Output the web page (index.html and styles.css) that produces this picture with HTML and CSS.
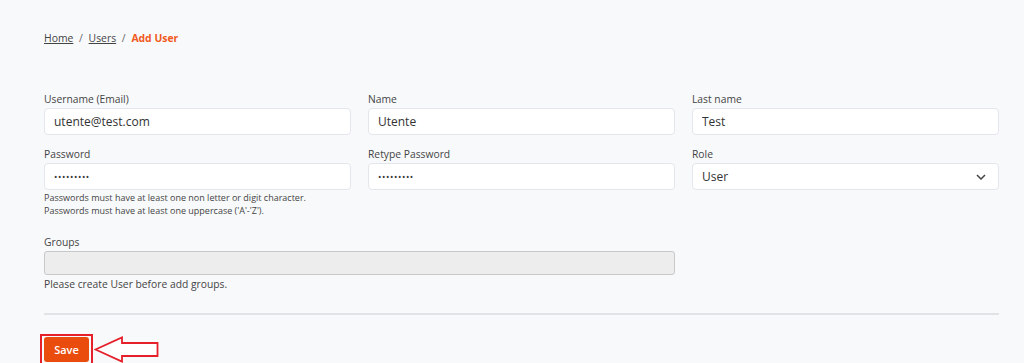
FILE: index.html
```html
<!DOCTYPE html>
<html lang="en">
<head>
  <meta charset="UTF-8">
  <title>Add User</title>
  <link rel="stylesheet" href="styles.css">
</head>
<body>
  <div class="page">
    <nav class="breadcrumb">
      <a href="#">Home</a>
      <span class="sep">/</span>
      <a href="#">Users</a>
      <span class="sep">/</span>
      <span class="current">Add User</span>
    </nav>

    <form class="user-form">
      <div class="form-grid">
        <div class="form-group">
          <label for="username">Username (Email)</label>
          <input type="text" id="username" value="utente@test.com">
        </div>
        <div class="form-group">
          <label for="name">Name</label>
          <input type="text" id="name" value="Utente">
        </div>
        <div class="form-group">
          <label for="lastname">Last name</label>
          <input type="text" id="lastname" value="Test">
        </div>

        <div class="form-group">
          <label for="password">Password</label>
          <input type="password" id="password" value="123456789">
          <p class="hint">Passwords must have at least one non letter or digit character.</p>
          <p class="hint">Passwords must have at least one uppercase ('A'-'Z').</p>
        </div>
        <div class="form-group">
          <label for="retype">Retype Password</label>
          <input type="password" id="retype" value="123456789">
        </div>
        <div class="form-group">
          <label for="role">Role</label>
          <div class="select-wrap">
            <select id="role">
              <option>User</option>
            </select>
            <svg class="chevron" width="10" height="6" viewBox="0 0 10 6"><path d="M1 1l4 4 4-4" fill="none" stroke="#444" stroke-width="1.5"/></svg>
          </div>
        </div>

        <div class="form-group groups">
          <label>Groups</label>
          <div class="groups-box"></div>
          <p class="note">Please create User before add groups.</p>
        </div>
      </div>

      <hr class="divider">

      <div class="actions">
        <button type="submit" class="save-button">Save</button>
        <span class="highlight"></span>
        <svg class="arrow" width="66" height="27" viewBox="0 0 66 27">
          <path d="M1.5 13.5 L28 1.5 L28 7 L63.5 7 L63.5 20 L28 20 L28 25.5 Z" fill="#fff" stroke="#e5202a" stroke-width="1.8" stroke-linejoin="miter"/>
        </svg>
      </div>
    </form>
  </div>
</body>
</html>
```

FILE: styles.css
```css
body {
  margin: 0;
  background: #f8f9fb;
  font-family: 'Open Sans', sans-serif;
  color: #333;
}

.page {
  padding: 30px 25px 0 44px;
}

.breadcrumb {
  font-size: 10.4px;
  color: #555;
  height: 16px;
  line-height: 16px;
}

.breadcrumb a {
  color: #444;
  text-decoration: underline;
}

.breadcrumb .sep {
  margin: 0 3px;
  color: #666;
}

.breadcrumb .current {
  color: #f05a22;
  font-weight: 700;
}

.user-form {
  margin-top: 46px;
}

.form-grid {
  display: grid;
  grid-template-columns: repeat(3, 307px);
  column-gap: 17px;
  row-gap: 12px;
  align-items: start;
}

.form-group label {
  display: block;
  font-size: 10.3px;
  color: #444;
  line-height: 14px;
  margin-bottom: 2px;
}

.form-group input,
.form-group select {
  width: 100%;
  height: 27px;
  box-sizing: border-box;
  padding: 0 9px;
  border: 1px solid #e3e6ea;
  border-radius: 4px;
  background: #fff;
  font-family: 'Open Sans', sans-serif;
  font-size: 12px;
  color: #333;
  outline: none;
}

.form-group input[type="password"] {
  font-size: 9px;
  letter-spacing: 0.6px;
}

.select-wrap {
  position: relative;
}

.form-group select {
  appearance: none;
  -webkit-appearance: none;
}

.chevron {
  position: absolute;
  right: 13px;
  top: 11px;
  pointer-events: none;
}

.hint {
  margin: 0;
  font-size: 9px;
  color: #444;
  line-height: 13px;
}

.hint:first-of-type {
  margin-top: 1px;
}

.groups {
  grid-column: 1 / 3;
  margin-top: 6px;
}

.groups-box {
  height: 24px;
  background: #ededed;
  border: 1px solid #c8c8c8;
  border-radius: 3px;
  box-sizing: border-box;
}

.note {
  margin: 2px 0 0;
  font-size: 10.3px;
  color: #444;
  line-height: 14px;
}

.divider {
  margin: 22px 0 0;
  border: none;
  height: 2px;
  background: #e1e3e6;
  width: 955px;
}

.actions {
  position: relative;
  margin-top: 19px;
  height: 30px;
}

.save-button {
  width: 45px;
  height: 25px;
  border: none;
  border-radius: 3px;
  background: #ea4c0e;
  color: #fff;
  font-family: 'Open Sans', sans-serif;
  font-size: 11px;
  font-weight: 600;
  padding: 0;
  margin-top: 3px;
}

/* red annotation around the button */
.highlight {
  position: absolute;
  left: -4px;
  top: 0;
  width: 49px;
  height: 30px;
  border: 2px solid #e5202a;
  box-sizing: content-box;
  border-bottom: none;
  pointer-events: none;
}

.arrow {
  position: absolute;
  left: 50px;
  top: 2px;
}
```
